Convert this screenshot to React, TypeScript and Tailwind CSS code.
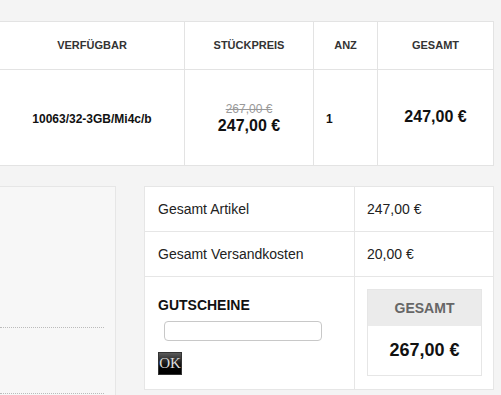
import React from "react";

const F = { fontFamily: '"Liberation Sans", Arial, sans-serif' };

export default function App() {
  return (
    <div className="w-[501px] h-[395px] overflow-hidden bg-[#f4f4f4] pt-[21px] text-[#111]" style={F}>
      {/* Product table */}
      <div className="w-[494px] bg-white border-t border-b border-r border-[#e3e3e3]">
        <div className="grid grid-cols-[184px_129px_64px_116px] h-[48px] border-b border-[#e3e3e3] text-[11px] font-bold text-[#333]">
          <div className="flex items-center justify-center">VERFÜGBAR</div>
          <div className="flex items-center justify-center border-l border-[#e3e3e3]">STÜCKPREIS</div>
          <div className="flex items-center justify-center border-l border-[#e3e3e3]">ANZ</div>
          <div className="flex items-center justify-center border-l border-[#e3e3e3]">GESAMT</div>
        </div>
        <div className="grid grid-cols-[184px_129px_64px_116px] h-[95px]">
          <div className="flex items-center justify-center text-[12px] font-bold pt-[3px]">10063/32-3GB/Mi4c/b</div>
          <div className="flex flex-col items-center justify-center border-l border-[#e3e3e3] pt-[3px]">
            <span className="text-[12px] text-[#999] line-through leading-[14px]">267,00 €</span>
            <span className="text-[16px] font-bold leading-[20px]">247,00 €</span>
          </div>
          <div className="flex items-center border-l border-[#e3e3e3] pl-[12px] text-[12px] font-bold pt-[3px]">1</div>
          <div className="flex items-center justify-center border-l border-[#e3e3e3] text-[16px] font-bold pb-[1px]">247,00 €</div>
        </div>
      </div>

      {/* Bottom section */}
      <div className="flex mt-[20px]">
        <div className="w-[116px] h-[220px] bg-[#f7f7f7] border-t border-r border-[#e6e6e6] pt-[140px]">
          <div className="w-[104px] border-t border-dotted border-[#bbb]"></div>
          <div className="w-[104px] border-t border-dotted border-[#bbb] mt-[65px]"></div>
        </div>
        <div className="ml-[28px] w-[350px] h-[204px] bg-white border border-[#e6e6e6] text-[14px] text-[#222]">
          <div className="grid grid-cols-[209px_1fr] h-[45px] border-b border-[#e6e6e6]">
            <div className="flex items-center pl-[13px]">Gesamt Artikel</div>
            <div className="flex items-center pl-[12px] border-l border-[#e6e6e6]">247,00 €</div>
          </div>
          <div className="grid grid-cols-[209px_1fr] h-[45px] border-b border-[#e6e6e6]">
            <div className="flex items-center pl-[13px]">Gesamt Versandkosten</div>
            <div className="flex items-center pl-[12px] border-l border-[#e6e6e6]">20,00 €</div>
          </div>
          <div className="grid grid-cols-[209px_1fr] h-[112px]">
            <div className="pl-[13px] pt-[20px]">
              <div className="text-[14px] font-bold text-[#111] leading-[16px]">GUTSCHEINE</div>
              <div className="ml-[6px] mt-[8px] w-[158px] h-[20px] rounded-[4px] border border-[#c8c8c8] bg-white"></div>
              <button
                className="mt-[11px] w-[24px] h-[23px] flex items-center justify-center bg-gradient-to-b from-[#5a5a5a] via-[#1a1a1a] to-[#000] border border-[#333] text-[#ddd] text-[15px] leading-none"
                style={{ fontFamily: '"Liberation Serif", "Times New Roman", serif' }}
              >
                OK
              </button>
            </div>
            <div className="border-l border-[#e6e6e6] pl-[12px] pt-[12px]">
              <div className="w-[115px] h-[87px] border border-[#e6e6e6] flex flex-col">
                <div className="h-[36px] bg-[#ebebeb] flex items-center justify-center text-[14px] font-bold text-[#666]">GESAMT</div>
                <div className="flex-1 flex items-center justify-center text-[18px] font-bold text-[#111]">267,00 €</div>
              </div>
            </div>
          </div>
        </div>
      </div>
    </div>
  );
}
